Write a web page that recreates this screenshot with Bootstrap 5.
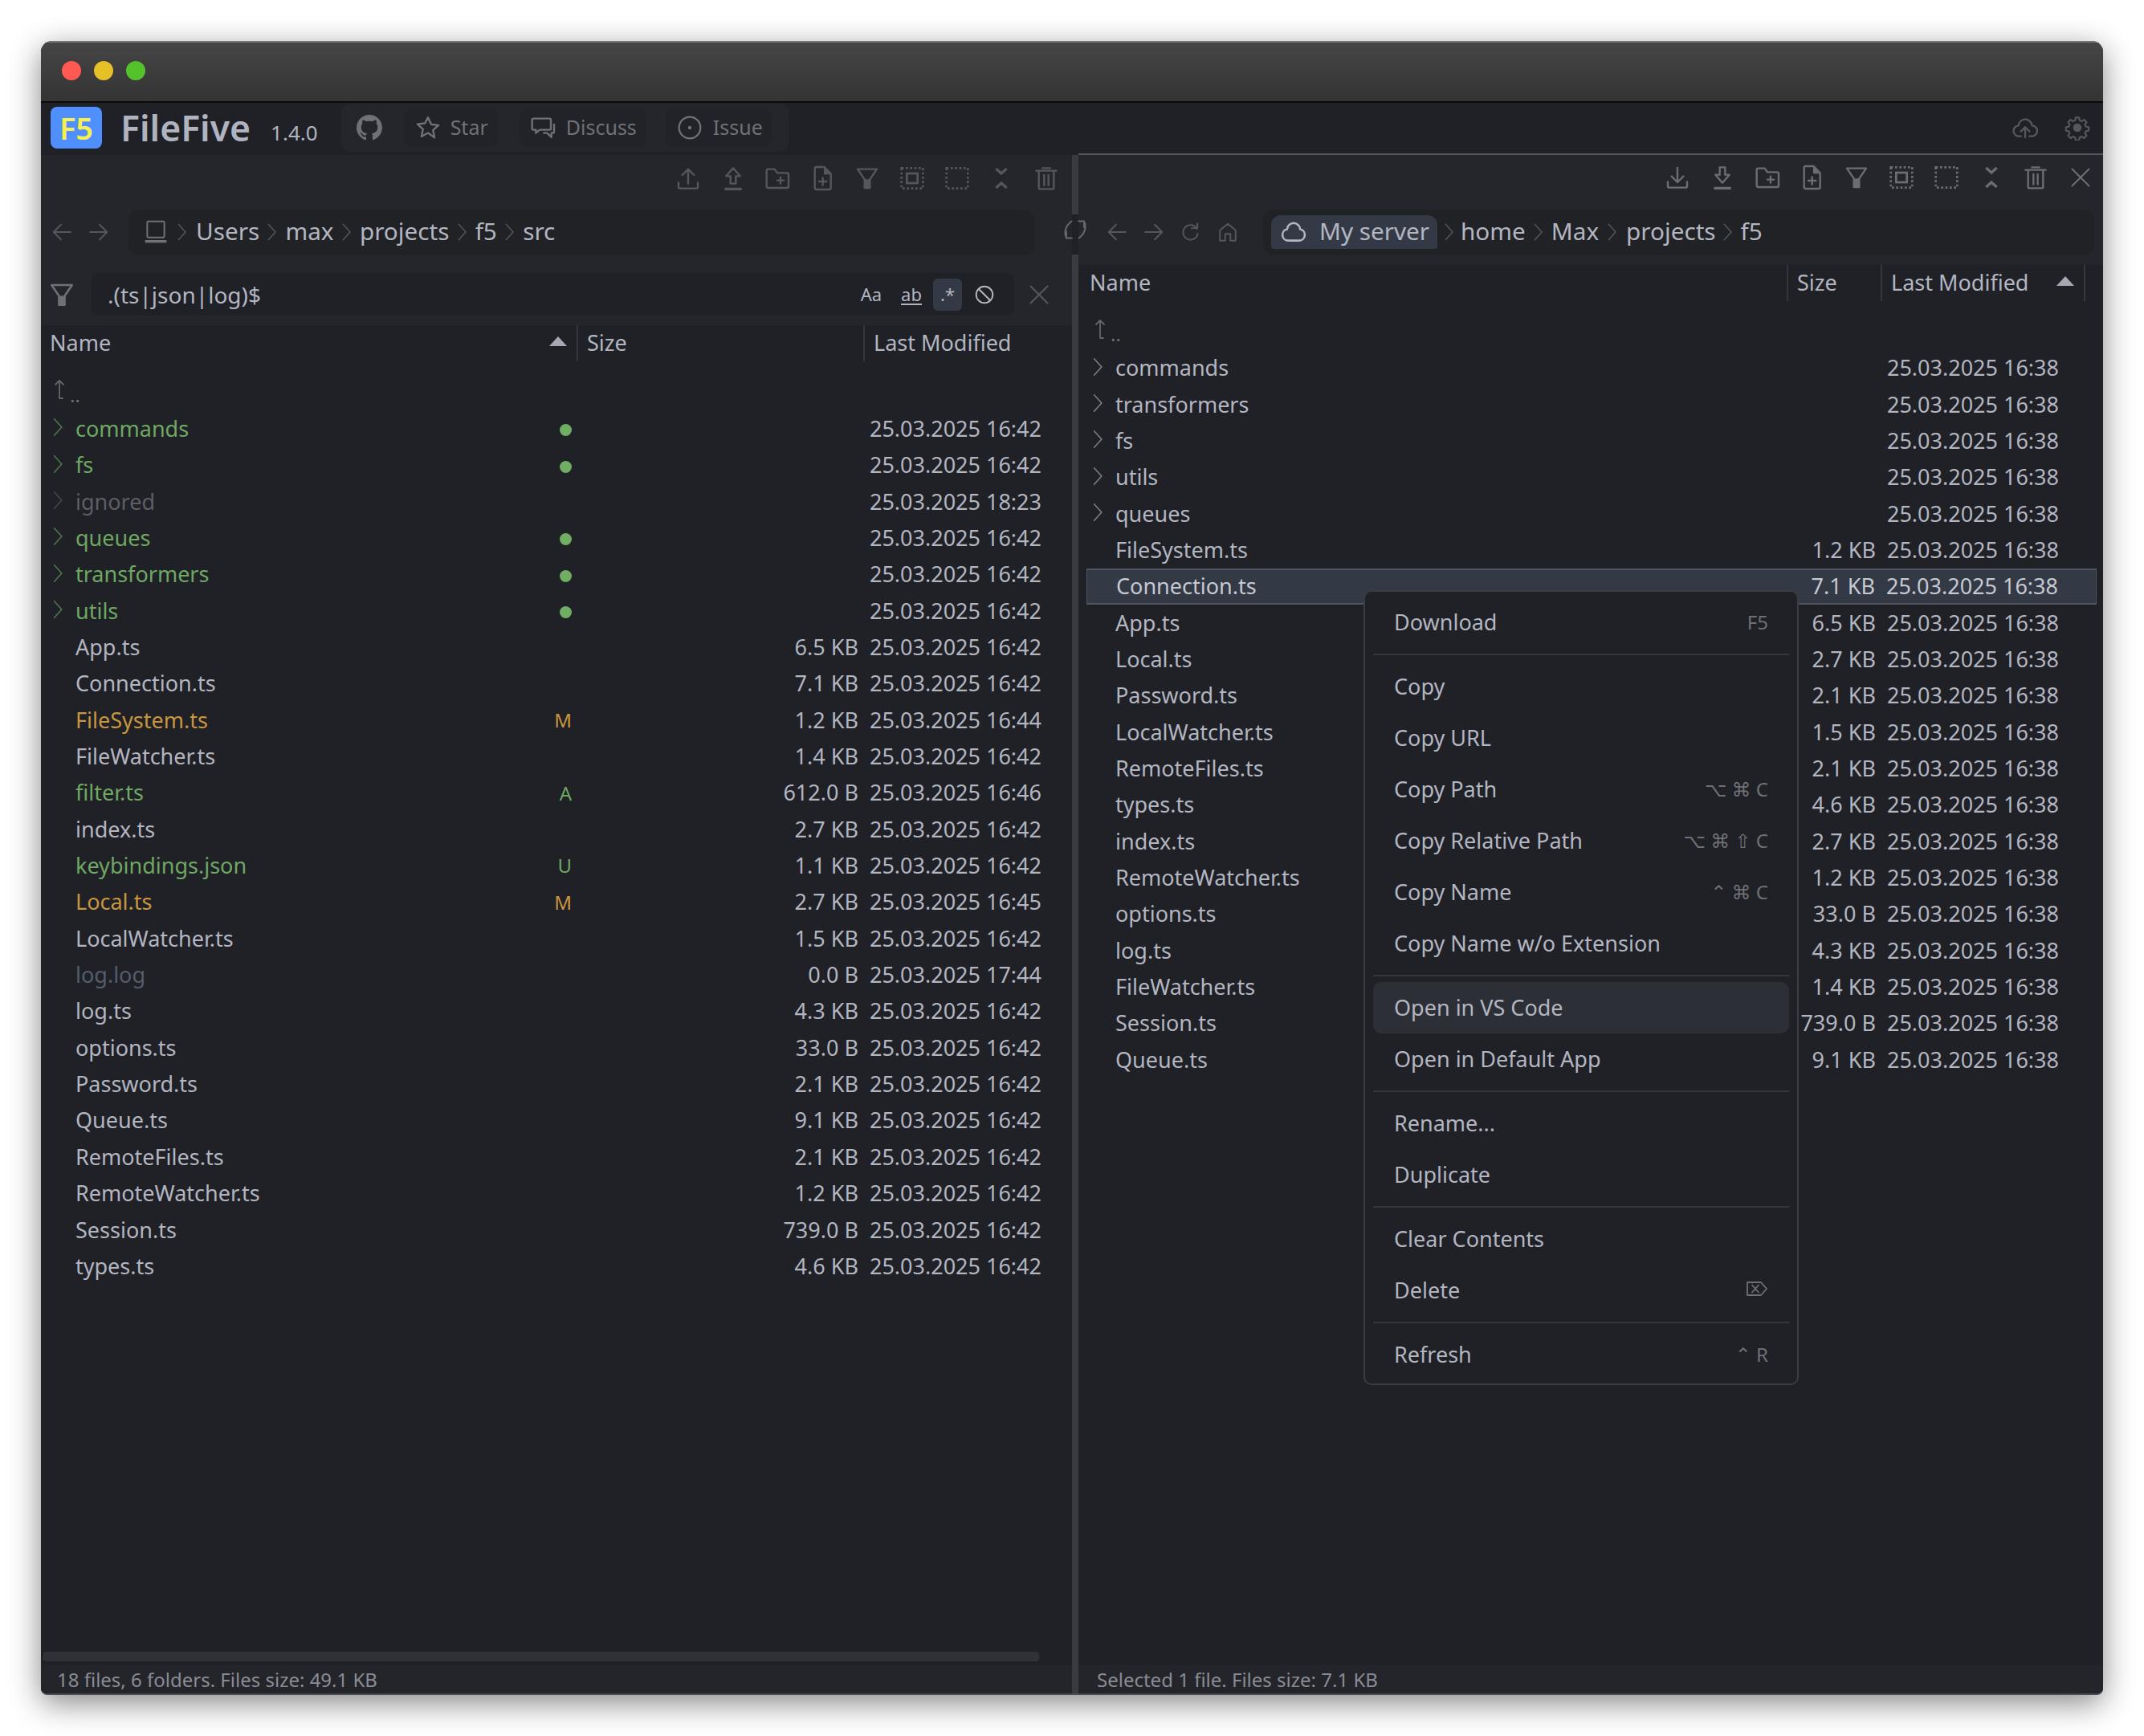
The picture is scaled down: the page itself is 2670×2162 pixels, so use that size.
<!DOCTYPE html>
<html lang="en" data-bs-theme="dark">
<head>
<meta charset="utf-8">
<title>FileFive</title>
<link href="https://cdn.jsdelivr.net/npm/bootstrap@5.3.0/dist/css/bootstrap.min.css" rel="stylesheet">
<style>
html,body{background:#fff;margin:0;padding:0}
body{font-family:"Noto Sans","Liberation Sans",sans-serif;font-size:27px;color:#b3b6c1;width:2670px;height:2162px;overflow:hidden}
.appwin{position:relative;width:2568px;height:2060px;margin:51px 0 0 51px;border-radius:14px 14px 8px 8px;background:#1f2127;box-shadow:0 10px 38px rgba(0,0,0,.48);overflow:hidden;border-bottom:2px solid #4a4c50}
.tbar{height:77px;background:linear-gradient(#454545,#343434);border-top:2px solid #777;border-bottom:2px solid #0b0b0b;padding-left:26px;gap:16px}
.tl{width:24px;height:24px;border-radius:50%;margin-top:-3px}
.tl-r{background:#ff5a52}.tl-y{background:#e6c029}.tl-g{background:#53c22b}
.topnav{height:65px;padding-left:12px;padding-right:16px;padding-bottom:3px}
.logo{width:64px;height:52px;background:#4f8fff;color:#f7ef4b;font-weight:600;font-size:38px;border-radius:8px;line-height:52px;text-align:center}
.appname{font-weight:600;font-size:44.5px;margin-left:23px;color:#b0b3c0;line-height:1}
.appver{font-size:26px;margin-left:25px;color:#b0b3c0;padding-top:12px}
.linkgrp{margin-left:29px;height:60px;width:557px;background:#24262b;border-radius:12px;padding:0 19px 0 19px}
.ghic{width:32px;height:32px;color:#6f7176;margin-right:27px;flex:none}
.lbtn.btn{height:47px;background:#212328;border:0;border-radius:10px;color:#6f7176;font-size:25px;padding:0 12px 0 14px;display:flex;align-items:center;gap:12px;flex:none}
.lbtn svg{width:32px;height:32px}
.discbtn.btn{margin-left:26px;margin-right:2px;gap:13px}
.issbtn.btn{margin-left:22px;gap:13px}
.ticon{width:32px;height:32px;color:#55575c}
.panes{height:1916px}
.lpane{width:1284px;height:100%}
.rpane{flex:1 1 0;height:calc(100% + 2px);border-top:2px solid #55575c;margin-top:-2px}
.splitwrap{width:8px;height:100%;position:relative;flex:none}
.splitbar{background:#393b41;width:8px}
.syncslot{height:50px;width:8px}
.syncic{position:absolute;left:-10px;top:79px;width:28px;height:28px;color:#66686d}
.chrome{background:#24262b}
.tools{height:58px;justify-content:flex-end;padding-right:4px}
.rpane .tools{padding-right:0;height:56px}
.tbtn{width:55.8px;height:100%;color:#55575c;flex:none}
.rpane .tbtn{color:#6b6d72}
.tbtn svg{width:32px;height:32px}
.pathrow{height:57px;margin-top:9px}
.rpane .pathrow{height:70px;margin-top:11px;padding-bottom:13px}
.navbtn{width:46px;flex:none;color:#55575c}
.navbtn svg{width:26px;height:26px}
.navfirst{margin-left:3px}
.rpane .navfirst{margin-left:25px}
.pathbox{height:56px;background:#202226;border-radius:12px;margin-left:14px;width:1128px;padding-left:18px;font-size:29.7px;color:#b3b6c1;white-space:nowrap}
.rpane .pathbox{margin-left:21px;width:1035px;padding-left:10px}
.chev{width:32.3px;color:#55575c;display:flex;justify-content:center}
.chev svg{width:14px;height:24px}
.chev-a{width:29px}.chev-b{width:32px}.chev-c{width:31px}.chev-d{width:34px}
.lapt{width:32px;height:32px;color:#6f7176}
.srvpill{height:42px;background:#333a46;border-radius:12px 12px 4px 4px;padding:0 9px 0 11px;gap:15px;width:207px;flex:none}
.srvpill svg{width:34px;height:34px;color:#b3b6c1;flex:none}
.filtrow{height:88px;padding-top:23px;padding-bottom:12px}
.filtic{width:63px;color:#6f7176;flex:none;padding-right:12px}
.filtic svg{width:34px;height:34px}
.filtbox{width:1149px;height:53px;background:#1f2127;border-radius:10px;padding-left:20px;font-size:28px;color:#b3b6c1;flex:none}
.optb{height:40px;color:#b3b6c1;font-size:22px;flex:none;display:flex;align-items:center;justify-content:center}
.optb u{text-underline-offset:3px}
.opton{background:#333a46;border-radius:6px;width:36px;margin-left:9px}
.optw{width:36px}
.optm{margin-left:14px}
.optban{width:28px;margin-left:14px;margin-right:23px}
.optban svg{width:26px;height:26px}
.filtx{width:62px;color:#55575c;flex:none}
.filtx svg{width:28px;height:28px}
.hdr{height:45px;padding-left:11px;background:#1f2127}
.rpane .hdr{padding-left:14px}
.hcol{height:100%;flex:none}
.hcol+.hcol{border-left:2px solid #35373d;padding-left:11px}
.hcol-end{border-right:2px solid #35373d}
.sorttri{width:0;height:0;border-left:11px solid transparent;border-right:11px solid transparent;border-bottom:12px solid #a6a9b4;margin-right:12px;margin-top:-6px}
.flist{padding-top:16.200px;flex:1 1 0}
.rpane .flist{padding-top:15.500px}
.frow{height:45.35px;white-space:nowrap}
.lpane .frow{padding-right:38px;padding-left:14px}
.rpane .frow{padding-right:47px;margin-left:10px;margin-right:8px;padding-left:7px}
.cchv{width:29px;flex:none;color:inherit}
.cchv svg{width:15px;height:26px;display:block;margin-top:-4px;opacity:.62}
.cname{flex:1 1 0;min-width:0}
.cmark{width:40px;text-align:right;flex:none;font-size:24px}
.lpane .csize{width:357px}
.csize{width:100px;text-align:right;flex:none;color:#b3b6c1}
.cdate{width:228px;text-align:right;flex:none;color:#b3b6c1}
.sel .csize,.sel .cdate{color:#c6c9d2}
.gdot{width:15px;height:15px;border-radius:50%;background:#6fae63;display:inline-block}
.c-g{color:#6fa862}.c-o{color:#c9963f}.c-i{color:#5c5e67}.c-ll{color:#555c6b}
.sel{background:#333a46;border-top:2px solid #4f545d;border-bottom:2px solid #4f545d;border-left:1px solid #4f545d;border-right:1px solid #4f545d;color:#c6c9d2}
.pup{width:18px;height:30px;color:#63656b;margin-right:4px;margin-top:-5px}
.pdots{color:#6f7176;font-size:24px;line-height:1;margin-top:6px}
.rpane .pup{margin-left:1px}
.sbar{height:12px;width:1241px;background:#2f3138;border-radius:4px;margin-left:2px;margin-bottom:4px;flex:none}
.stat{height:36px;background:#23252a;font-size:24px;color:#8a8c95;padding-left:20px;padding-top:1px;flex:none}
.rpane .stat{padding-left:23px}
.spacer-rsb{height:16px;flex:none}
.ctxm.dropdown-menu{position:absolute;display:block;left:1647px;top:684px;width:542px;min-width:0;padding:6px 10px 4px;background:#1f2127;border:2px solid #3a3c43;border-radius:10px;font-size:27px;margin:0;color:#b3b6c1;z-index:5}
.ctxm .dropdown-item{height:64px;color:#b3b6c1;padding:0 26px;border-radius:10px;display:flex;justify-content:space-between;align-items:center;background:none}
.ctxm .dropdown-item.hov{background:#2d2f37}
.ctxm .dropdown-divider{margin:7px 0;border-top:2px solid #35373c;opacity:1;height:0}
.kbd{color:#6e7075;font-size:24px;font-family:"Noto Sans","DejaVu Sans",sans-serif}
.kbd svg{width:28px;height:22px;display:block;margin-top:-4px}
svg{display:block}
.st{fill:none;stroke:currentColor;stroke-width:1.8;stroke-linecap:round;stroke-linejoin:round}
</style>
</head>
<body>
<svg width="0" height="0" style="position:absolute" aria-hidden="true">
<defs>
<symbol id="i-upt" viewBox="0 0 24 24"><path class="st" d="M3 16v4a1.500 1.500 0 0 0 1.500 1.500h15a1.500 1.500 0 0 0 1.500-1.500v-4M12 17V3.500M6.500 9 12 3.500 17.500 9"/></symbol>
<symbol id="i-upb" viewBox="0 0 24 24"><path class="st" d="M9.500 17v-7H5.500L12 2.500 18.500 10h-4v7z"/><path fill="none" stroke="currentColor" stroke-width="2.400" d="M4 22h16"/></symbol>
<symbol id="i-dnt" viewBox="0 0 24 24"><path class="st" d="M3 16v4a1.500 1.500 0 0 0 1.500 1.500h15a1.500 1.500 0 0 0 1.500-1.500v-4M12 3v13.500M6.500 11 12 16.500 17.500 11"/></symbol>
<symbol id="i-dnb" viewBox="0 0 24 24"><path class="st" d="M9.500 2.500v7H5.500L12 17l6.500-7.500h-4v-7z"/><path fill="none" stroke="currentColor" stroke-width="2.400" d="M4 22h16"/></symbol>
<symbol id="i-fold" viewBox="0 0 24 24"><path class="st" d="M2 5a1.500 1.500 0 0 1 1.500-1.500h6L12 7h9a1.500 1.500 0 0 1 1.500 1.500v11a1.500 1.500 0 0 1-1.500 1.500H3.500A1.500 1.500 0 0 1 2 19.500z" stroke-width="2"/><path class="st" d="M15 11v6M12 14h6" stroke-width="1.800"/></symbol>
<symbol id="i-file" viewBox="0 0 24 24"><path class="st" d="M6 1.500h8l6 6.500v13a1.500 1.500 0 0 1-1.500 1.500h-12A1.500 1.500 0 0 1 5 21V3a1.500 1.500 0 0 1 1-1.500z" stroke-width="2"/><path fill="currentColor" d="M13.500 2v6.500H20z"/><path class="st" d="M12.500 11.500v7M9 15h7" stroke-width="1.800"/></symbol>
<symbol id="i-filt" viewBox="0 0 24 24"><path class="st" d="M3 3.500h18l-6.500 9.500v8h-5v-8z" stroke-width="2"/><path fill="currentColor" d="M10 13h4v8h-4z"/></symbol>
<symbol id="i-sela" viewBox="0 0 24 24"><rect x="2" y="2.500" width="20" height="19" fill="none" stroke="currentColor" stroke-width="2" stroke-dasharray="2 2"/><rect x="7" y="7.500" width="10" height="9" fill="none" stroke="currentColor" stroke-width="2"/></symbol>
<symbol id="i-seln" viewBox="0 0 24 24"><rect x="2" y="2.500" width="20" height="19" fill="none" stroke="currentColor" stroke-width="2" stroke-dasharray="2 2"/></symbol>
<symbol id="i-coll" viewBox="0 0 24 24"><path fill="none" stroke="currentColor" stroke-width="2.400" d="M7 3l5 4.500L17 3M7 21l5-4.500L17 21"/></symbol>
<symbol id="i-trash" viewBox="0 0 24 24"><path class="st" d="M5 5.500V21a1 1 0 0 0 1 1h12a1 1 0 0 0 1-1V5.500M2.500 5h19M8.500 2.500h7M10 9v9.500M14 9v9.500" stroke-width="2"/></symbol>
<symbol id="i-x" viewBox="0 0 24 24"><path class="st" d="M3 3l18 18M21 3 3 21" stroke-width="1.700"/></symbol>
<symbol id="i-left" viewBox="0 0 24 24"><path class="st" d="M22 12H3M11 3.500 2.500 12l8.500 8.500" stroke-width="1.600"/></symbol>
<symbol id="i-right" viewBox="0 0 24 24"><path class="st" d="M2 12h19M13 3.500l8.500 8.500-8.500 8.500" stroke-width="1.600"/></symbol>
<symbol id="i-rel" viewBox="0 0 24 24"><path class="st" d="M19 8a8.500 8.500 0 1 0 1 6" stroke-width="1.800"/><path class="st" d="M13 7.500h6.500V2" stroke-width="1.800"/></symbol>
<symbol id="i-home" viewBox="0 0 24 24"><path class="st" d="M3 22V10l9-7.500 9 7.500v12h-6v-8H9v8z" stroke-width="1.600"/></symbol>
<symbol id="i-chev" viewBox="0 0 14 24"><path fill="none" stroke="currentColor" stroke-width="1.500" d="M2 2l9 10-9 10"/></symbol>
<symbol id="i-lap" viewBox="0 0 24 24"><rect x="4" y="2" width="16" height="15" rx="1" fill="none" stroke="currentColor" stroke-width="1.500"/><path fill="currentColor" d="M2 19.500h20V22H2z"/></symbol>
<symbol id="i-cloud" viewBox="0 0 24 24"><path class="st" d="M7 19.500a5 5 0 0 1-.8-9.900A6 6 0 0 1 12 4a6 6 0 0 1 5.800 5.600A5 5 0 0 1 17 19.500z" stroke-width="1.400"/></symbol>
<symbol id="i-cldu" viewBox="0 0 24 24"><path class="st" d="M8 20H6.500A5 5 0 0 1 5.800 10 7 7 0 0 1 12 4a7 7 0 0 1 6.500 6 5 5 0 0 1-.5 10h-2M12 21v-9M8 15.500 12 11.500l4 4" stroke-width="1.800"/></symbol>
<symbol id="i-gear" viewBox="0 0 24 24"><path class="st" d="M10.200 1.500h3.600l.5 2.900 2.300 1 2.400-1.700 2.600 2.600-1.700 2.400 1 2.300 2.900.5v3.600l-2.900.5-1 2.300 1.700 2.400-2.600 2.600-2.400-1.700-2.300 1-.5 2.900h-3.600l-.5-2.900-2.300-1-2.400 1.700-2.600-2.600 1.700-2.400-1-2.300-2.900-.5v-3.600l2.900-.5 1-2.300-1.700-2.400 2.600-2.600 2.400 1.700 2.300-1z" transform="translate(1.200 1.200) scale(.9)" stroke-width="2"/><circle cx="12" cy="12" r="4" fill="currentColor"/></symbol>
<symbol id="i-gh" viewBox="0 0 16 16"><path fill="currentColor" d="M8 0C3.580 0 0 3.580 0 8c0 3.540 2.290 6.530 5.470 7.590.4.070.55-.17.55-.38 0-.19-.01-.82-.01-1.490-2.010.37-2.530-.49-2.690-.94-.09-.23-.48-.94-.82-1.130-.28-.15-.68-.52-.01-.53.63-.01 1.080.58 1.230.82.72 1.210 1.870.87 2.330.66.070-.52.28-.87.51-1.070-1.780-.2-3.640-.89-3.640-3.950 0-.87.31-1.590.82-2.150-.08-.2-.36-1.020.08-2.120 0 0 .67-.21 2.200.82.64-.18 1.320-.27 2-.27.68 0 1.360.09 2 .27 1.530-1.040 2.200-.82 2.200-.82.44 1.100.16 1.920.08 2.120.51.56.82 1.270.82 2.150 0 3.070-1.870 3.750-3.650 3.950.29.25.54.73.54 1.480 0 1.070-.01 1.930-.01 2.200 0 .21.15.46.55.38A8.013 8.013 0 0 0 16 8c0-4.420-3.580-8-8-8z"/></symbol>
<symbol id="i-star" viewBox="0 0 24 24"><path class="st" d="M12 2.500l2.900 6.400 6.900.8-5.100 4.700 1.400 6.900L12 16.900l-6.100 3.400 1.400-6.900-5.100-4.700 6.900-.8z" stroke-width="2"/></symbol>
<symbol id="i-disc" viewBox="0 0 24 24"><path class="st" d="M3 3.500h15.500a1 1 0 0 1 1 1V13a1 1 0 0 1-1 1H9l-3.500 3v-3H3a1 1 0 0 1-1-1V4.500a1 1 0 0 1 1-1z" stroke-width="1.900"/><path class="st" d="M22.500 9v7a1 1 0 0 1-1 1h-1.500v4l-4-4h-3" stroke-width="1.900"/></symbol>
<symbol id="i-iss" viewBox="0 0 24 24"><circle cx="12" cy="12" r="10" fill="none" stroke="currentColor" stroke-width="1.700"/><circle cx="12" cy="12" r="1.700" fill="currentColor"/></symbol>
<symbol id="i-sync" viewBox="0 0 24 24"><path class="st" d="M15.500 3h6v6.500M21.500 3.500c1.500 3 1.500 6.500.5 9.500-.8 3-3 5.500-6 8M8.500 21h-6v-6.500M2.500 20.500c-1.500-3-1.500-6.500-.5-9.500.8-3 3-5.500 6-8" stroke-width="2.400"/></symbol>
<symbol id="i-ban" viewBox="0 0 24 24"><circle cx="12" cy="12" r="9.500" fill="none" stroke="currentColor" stroke-width="1.800"/><path fill="none" stroke="currentColor" stroke-width="1.800" d="M5.500 5.500l13 13"/></symbol>
<symbol id="i-del" viewBox="0 0 28 22"><path class="st" d="M2 3h17l7 8-7 8H2zM8 6.500l8 9M16 6.500l-8 9" stroke-width="1.800"/></symbol>
<symbol id="i-pup" viewBox="0 0 18 30"><path class="st" d="M9 3v22h4M4 8l5-5 5 5" stroke-width="1.600"/></symbol>
</defs>
</svg>

<div class="appwin d-flex flex-column">
  <div class="tbar d-flex align-items-center"><span class="tl tl-r"></span><span class="tl tl-y"></span><span class="tl tl-g"></span></div>
  <div class="topnav d-flex align-items-center">
    <div class="logo flex-shrink-0">F5</div>
    <div class="appname">FileFive</div>
    <div class="appver">1.4.0</div>
    <div class="linkgrp d-flex align-items-center">
      <svg class="ghic"><use href="#i-gh"/></svg>
      <button class="btn lbtn"><svg><use href="#i-star"/></svg>Star</button>
      <button class="btn lbtn discbtn"><svg><use href="#i-disc"/></svg>Discuss</button>
      <button class="btn lbtn issbtn"><svg><use href="#i-iss"/></svg>Issue</button>
    </div>
    <svg class="ticon ms-auto"><use href="#i-cldu"/></svg>
    <svg class="ticon" style="margin-left:33px"><use href="#i-gear"/></svg>
  </div>

  <div class="panes d-flex">
    <!-- left -->
    <div class="lpane d-flex flex-column">
      <div class="chrome">
        <div class="tools d-flex">
          <div class="tbtn d-flex align-items-center justify-content-center"><svg><use href="#i-upt"/></svg></div>
          <div class="tbtn d-flex align-items-center justify-content-center"><svg><use href="#i-upb"/></svg></div>
          <div class="tbtn d-flex align-items-center justify-content-center"><svg><use href="#i-fold"/></svg></div>
          <div class="tbtn d-flex align-items-center justify-content-center"><svg><use href="#i-file"/></svg></div>
          <div class="tbtn d-flex align-items-center justify-content-center"><svg><use href="#i-filt"/></svg></div>
          <div class="tbtn d-flex align-items-center justify-content-center"><svg><use href="#i-sela"/></svg></div>
          <div class="tbtn d-flex align-items-center justify-content-center"><svg><use href="#i-seln"/></svg></div>
          <div class="tbtn d-flex align-items-center justify-content-center"><svg><use href="#i-coll"/></svg></div>
          <div class="tbtn d-flex align-items-center justify-content-center"><svg><use href="#i-trash"/></svg></div>
        </div>
        <div class="pathrow d-flex align-items-center">
          <div class="navbtn navfirst d-flex justify-content-center"><svg><use href="#i-left"/></svg></div>
          <div class="navbtn d-flex justify-content-center"><svg><use href="#i-right"/></svg></div>
          <div class="pathbox d-flex align-items-center">
            <svg class="lapt"><use href="#i-lap"/></svg>
            <span class="chev chev-d"><svg><use href="#i-chev"/></svg></span><span>Users</span>
            <span class="chev"><svg><use href="#i-chev"/></svg></span><span>max</span>
            <span class="chev"><svg><use href="#i-chev"/></svg></span><span>projects</span>
            <span class="chev"><svg><use href="#i-chev"/></svg></span><span>f5</span>
            <span class="chev"><svg><use href="#i-chev"/></svg></span><span>src</span>
          </div>
        </div>
        <div class="filtrow d-flex align-items-center">
          <div class="filtic d-flex justify-content-center"><svg><use href="#i-filt"/></svg></div>
          <div class="filtbox d-flex align-items-center">
            <span class="flex-grow-1">.(ts|json|log)$</span>
            <span class="optb optw">Aa</span>
            <span class="optb optw optm"><u>ab</u></span>
            <span class="optb opton">.*</span>
            <span class="optb optban"><svg><use href="#i-ban"/></svg></span>
          </div>
          <div class="filtx d-flex justify-content-center"><svg><use href="#i-x"/></svg></div>
        </div>
      </div>
      <div class="hdr d-flex align-items-center">
        <div class="hcol d-flex align-items-center justify-content-between" style="width:656px">Name<span class="sorttri"></span></div>
        <div class="hcol d-flex align-items-center" style="width:357px">Size</div>
        <div class="hcol d-flex align-items-center">Last Modified</div>
      </div>
      <div class="flist">
        <div class="frow d-flex align-items-center"><svg class="pup"><use href="#i-pup"/></svg><span class="pdots">..</span></div>
        <div class="frow d-flex align-items-center c-g"><span class="cchv"><svg><use href="#i-chev"/></svg></span><span class="cname">commands</span><span class="cmark"><span class="gdot"></span></span><span class="csize"></span><span class="cdate">25.03.2025 16:42</span></div>
        <div class="frow d-flex align-items-center c-g"><span class="cchv"><svg><use href="#i-chev"/></svg></span><span class="cname">fs</span><span class="cmark"><span class="gdot"></span></span><span class="csize"></span><span class="cdate">25.03.2025 16:42</span></div>
        <div class="frow d-flex align-items-center c-i"><span class="cchv"><svg><use href="#i-chev"/></svg></span><span class="cname">ignored</span><span class="cmark"></span><span class="csize"></span><span class="cdate">25.03.2025 18:23</span></div>
        <div class="frow d-flex align-items-center c-g"><span class="cchv"><svg><use href="#i-chev"/></svg></span><span class="cname">queues</span><span class="cmark"><span class="gdot"></span></span><span class="csize"></span><span class="cdate">25.03.2025 16:42</span></div>
        <div class="frow d-flex align-items-center c-g"><span class="cchv"><svg><use href="#i-chev"/></svg></span><span class="cname">transformers</span><span class="cmark"><span class="gdot"></span></span><span class="csize"></span><span class="cdate">25.03.2025 16:42</span></div>
        <div class="frow d-flex align-items-center c-g"><span class="cchv"><svg><use href="#i-chev"/></svg></span><span class="cname">utils</span><span class="cmark"><span class="gdot"></span></span><span class="csize"></span><span class="cdate">25.03.2025 16:42</span></div>
        <div class="frow d-flex align-items-center"><span class="cchv"></span><span class="cname">App.ts</span><span class="cmark"></span><span class="csize">6.5 KB</span><span class="cdate">25.03.2025 16:42</span></div>
        <div class="frow d-flex align-items-center"><span class="cchv"></span><span class="cname">Connection.ts</span><span class="cmark"></span><span class="csize">7.1 KB</span><span class="cdate">25.03.2025 16:42</span></div>
        <div class="frow d-flex align-items-center c-o"><span class="cchv"></span><span class="cname">FileSystem.ts</span><span class="cmark">M</span><span class="csize">1.2 KB</span><span class="cdate">25.03.2025 16:44</span></div>
        <div class="frow d-flex align-items-center"><span class="cchv"></span><span class="cname">FileWatcher.ts</span><span class="cmark"></span><span class="csize">1.4 KB</span><span class="cdate">25.03.2025 16:42</span></div>
        <div class="frow d-flex align-items-center c-g"><span class="cchv"></span><span class="cname">filter.ts</span><span class="cmark">A</span><span class="csize">612.0 B</span><span class="cdate">25.03.2025 16:46</span></div>
        <div class="frow d-flex align-items-center"><span class="cchv"></span><span class="cname">index.ts</span><span class="cmark"></span><span class="csize">2.7 KB</span><span class="cdate">25.03.2025 16:42</span></div>
        <div class="frow d-flex align-items-center c-g"><span class="cchv"></span><span class="cname">keybindings.json</span><span class="cmark">U</span><span class="csize">1.1 KB</span><span class="cdate">25.03.2025 16:42</span></div>
        <div class="frow d-flex align-items-center c-o"><span class="cchv"></span><span class="cname">Local.ts</span><span class="cmark">M</span><span class="csize">2.7 KB</span><span class="cdate">25.03.2025 16:45</span></div>
        <div class="frow d-flex align-items-center"><span class="cchv"></span><span class="cname">LocalWatcher.ts</span><span class="cmark"></span><span class="csize">1.5 KB</span><span class="cdate">25.03.2025 16:42</span></div>
        <div class="frow d-flex align-items-center"><span class="cchv"></span><span class="cname c-ll">log.log</span><span class="cmark"></span><span class="csize">0.0 B</span><span class="cdate">25.03.2025 17:44</span></div>
        <div class="frow d-flex align-items-center"><span class="cchv"></span><span class="cname">log.ts</span><span class="cmark"></span><span class="csize">4.3 KB</span><span class="cdate">25.03.2025 16:42</span></div>
        <div class="frow d-flex align-items-center"><span class="cchv"></span><span class="cname">options.ts</span><span class="cmark"></span><span class="csize">33.0 B</span><span class="cdate">25.03.2025 16:42</span></div>
        <div class="frow d-flex align-items-center"><span class="cchv"></span><span class="cname">Password.ts</span><span class="cmark"></span><span class="csize">2.1 KB</span><span class="cdate">25.03.2025 16:42</span></div>
        <div class="frow d-flex align-items-center"><span class="cchv"></span><span class="cname">Queue.ts</span><span class="cmark"></span><span class="csize">9.1 KB</span><span class="cdate">25.03.2025 16:42</span></div>
        <div class="frow d-flex align-items-center"><span class="cchv"></span><span class="cname">RemoteFiles.ts</span><span class="cmark"></span><span class="csize">2.1 KB</span><span class="cdate">25.03.2025 16:42</span></div>
        <div class="frow d-flex align-items-center"><span class="cchv"></span><span class="cname">RemoteWatcher.ts</span><span class="cmark"></span><span class="csize">1.2 KB</span><span class="cdate">25.03.2025 16:42</span></div>
        <div class="frow d-flex align-items-center"><span class="cchv"></span><span class="cname">Session.ts</span><span class="cmark"></span><span class="csize">739.0 B</span><span class="cdate">25.03.2025 16:42</span></div>
        <div class="frow d-flex align-items-center"><span class="cchv"></span><span class="cname">types.ts</span><span class="cmark"></span><span class="csize">4.6 KB</span><span class="cdate">25.03.2025 16:42</span></div>
      </div>
      <div class="sbar"></div>
      <div class="stat d-flex align-items-center">18 files, 6 folders. Files size: 49.1 KB</div>
    </div>
    <!-- splitter -->
    <div class="splitwrap d-flex flex-column">
      <div class="splitbar" style="height:74px"></div>
      <div class="syncslot"></div>
      <div class="splitbar flex-grow-1"></div>
      <svg class="syncic"><use href="#i-sync"/></svg>
    </div>
    <!-- right -->
    <div class="rpane d-flex flex-column">
      <div class="chrome">
        <div class="tools d-flex">
          <div class="tbtn d-flex align-items-center justify-content-center"><svg><use href="#i-dnt"/></svg></div>
          <div class="tbtn d-flex align-items-center justify-content-center"><svg><use href="#i-dnb"/></svg></div>
          <div class="tbtn d-flex align-items-center justify-content-center"><svg><use href="#i-fold"/></svg></div>
          <div class="tbtn d-flex align-items-center justify-content-center"><svg><use href="#i-file"/></svg></div>
          <div class="tbtn d-flex align-items-center justify-content-center"><svg><use href="#i-filt"/></svg></div>
          <div class="tbtn d-flex align-items-center justify-content-center"><svg><use href="#i-sela"/></svg></div>
          <div class="tbtn d-flex align-items-center justify-content-center"><svg><use href="#i-seln"/></svg></div>
          <div class="tbtn d-flex align-items-center justify-content-center"><svg><use href="#i-coll"/></svg></div>
          <div class="tbtn d-flex align-items-center justify-content-center"><svg><use href="#i-trash"/></svg></div>
          <div class="tbtn d-flex align-items-center justify-content-center"><svg style="width:28px;height:28px"><use href="#i-x"/></svg></div>
        </div>
        <div class="pathrow d-flex align-items-center">
          <div class="navbtn navfirst d-flex justify-content-center"><svg><use href="#i-left"/></svg></div>
          <div class="navbtn d-flex justify-content-center"><svg><use href="#i-right"/></svg></div>
          <div class="navbtn d-flex justify-content-center"><svg><use href="#i-rel"/></svg></div>
          <div class="navbtn d-flex justify-content-center"><svg><use href="#i-home"/></svg></div>
          <div class="pathbox d-flex align-items-center">
            <span class="srvpill d-flex align-items-center"><svg><use href="#i-cloud"/></svg>My server</span>
            <span class="chev chev-a"><svg><use href="#i-chev"/></svg></span><span>home</span>
            <span class="chev chev-b"><svg><use href="#i-chev"/></svg></span><span>Max</span>
            <span class="chev chev-d"><svg><use href="#i-chev"/></svg></span><span>projects</span>
            <span class="chev chev-c"><svg><use href="#i-chev"/></svg></span><span>f5</span>
          </div>
        </div>
      </div>
      <div class="hdr d-flex align-items-center">
        <div class="hcol d-flex align-items-center" style="width:868px">Name</div>
        <div class="hcol d-flex align-items-center" style="width:117px">Size</div>
        <div class="hcol hcol-end d-flex align-items-center justify-content-between" style="width:255px">Last Modified<span class="sorttri"></span></div>
      </div>
      <div class="flist">
        <div class="frow d-flex align-items-center"><svg class="pup"><use href="#i-pup"/></svg><span class="pdots">..</span></div>
        <div class="frow d-flex align-items-center"><span class="cchv"><svg><use href="#i-chev"/></svg></span><span class="cname">commands</span><span class="csize"></span><span class="cdate">25.03.2025 16:38</span></div>
        <div class="frow d-flex align-items-center"><span class="cchv"><svg><use href="#i-chev"/></svg></span><span class="cname">transformers</span><span class="csize"></span><span class="cdate">25.03.2025 16:38</span></div>
        <div class="frow d-flex align-items-center"><span class="cchv"><svg><use href="#i-chev"/></svg></span><span class="cname">fs</span><span class="csize"></span><span class="cdate">25.03.2025 16:38</span></div>
        <div class="frow d-flex align-items-center"><span class="cchv"><svg><use href="#i-chev"/></svg></span><span class="cname">utils</span><span class="csize"></span><span class="cdate">25.03.2025 16:38</span></div>
        <div class="frow d-flex align-items-center"><span class="cchv"><svg><use href="#i-chev"/></svg></span><span class="cname">queues</span><span class="csize"></span><span class="cdate">25.03.2025 16:38</span></div>
        <div class="frow d-flex align-items-center"><span class="cchv"></span><span class="cname">FileSystem.ts</span><span class="csize">1.2 KB</span><span class="cdate">25.03.2025 16:38</span></div>
        <div class="frow d-flex align-items-center sel"><span class="cchv"></span><span class="cname">Connection.ts</span><span class="csize">7.1 KB</span><span class="cdate">25.03.2025 16:38</span></div>
        <div class="frow d-flex align-items-center"><span class="cchv"></span><span class="cname">App.ts</span><span class="csize">6.5 KB</span><span class="cdate">25.03.2025 16:38</span></div>
        <div class="frow d-flex align-items-center"><span class="cchv"></span><span class="cname">Local.ts</span><span class="csize">2.7 KB</span><span class="cdate">25.03.2025 16:38</span></div>
        <div class="frow d-flex align-items-center"><span class="cchv"></span><span class="cname">Password.ts</span><span class="csize">2.1 KB</span><span class="cdate">25.03.2025 16:38</span></div>
        <div class="frow d-flex align-items-center"><span class="cchv"></span><span class="cname">LocalWatcher.ts</span><span class="csize">1.5 KB</span><span class="cdate">25.03.2025 16:38</span></div>
        <div class="frow d-flex align-items-center"><span class="cchv"></span><span class="cname">RemoteFiles.ts</span><span class="csize">2.1 KB</span><span class="cdate">25.03.2025 16:38</span></div>
        <div class="frow d-flex align-items-center"><span class="cchv"></span><span class="cname">types.ts</span><span class="csize">4.6 KB</span><span class="cdate">25.03.2025 16:38</span></div>
        <div class="frow d-flex align-items-center"><span class="cchv"></span><span class="cname">index.ts</span><span class="csize">2.7 KB</span><span class="cdate">25.03.2025 16:38</span></div>
        <div class="frow d-flex align-items-center"><span class="cchv"></span><span class="cname">RemoteWatcher.ts</span><span class="csize">1.2 KB</span><span class="cdate">25.03.2025 16:38</span></div>
        <div class="frow d-flex align-items-center"><span class="cchv"></span><span class="cname">options.ts</span><span class="csize">33.0 B</span><span class="cdate">25.03.2025 16:38</span></div>
        <div class="frow d-flex align-items-center"><span class="cchv"></span><span class="cname">log.ts</span><span class="csize">4.3 KB</span><span class="cdate">25.03.2025 16:38</span></div>
        <div class="frow d-flex align-items-center"><span class="cchv"></span><span class="cname">FileWatcher.ts</span><span class="csize">1.4 KB</span><span class="cdate">25.03.2025 16:38</span></div>
        <div class="frow d-flex align-items-center"><span class="cchv"></span><span class="cname">Session.ts</span><span class="csize">739.0 B</span><span class="cdate">25.03.2025 16:38</span></div>
        <div class="frow d-flex align-items-center"><span class="cchv"></span><span class="cname">Queue.ts</span><span class="csize">9.1 KB</span><span class="cdate">25.03.2025 16:38</span></div>
      </div>
      <div class="spacer-rsb"></div>
      <div class="stat d-flex align-items-center">Selected 1 file. Files size: 7.1 KB</div>
    </div>
  </div>

  <div class="ctxm dropdown-menu">
    <div class="dropdown-item">Download<span class="kbd">F5</span></div>
    <hr class="dropdown-divider">
    <div class="dropdown-item">Copy</div>
    <div class="dropdown-item">Copy URL</div>
    <div class="dropdown-item">Copy Path<span class="kbd">⌥ ⌘ C</span></div>
    <div class="dropdown-item">Copy Relative Path<span class="kbd">⌥ ⌘ ⇧ C</span></div>
    <div class="dropdown-item">Copy Name<span class="kbd">⌃ ⌘ C</span></div>
    <div class="dropdown-item">Copy Name w/o Extension</div>
    <hr class="dropdown-divider">
    <div class="dropdown-item hov">Open in VS Code</div>
    <div class="dropdown-item">Open in Default App</div>
    <hr class="dropdown-divider">
    <div class="dropdown-item">Rename...</div>
    <div class="dropdown-item">Duplicate</div>
    <hr class="dropdown-divider">
    <div class="dropdown-item">Clear Contents</div>
    <div class="dropdown-item">Delete<span class="kbd"><svg><use href="#i-del"/></svg></span></div>
    <hr class="dropdown-divider">
    <div class="dropdown-item">Refresh<span class="kbd">⌃ R</span></div>
  </div>
</div>
<script src="https://cdn.jsdelivr.net/npm/bootstrap@5.3.0/dist/js/bootstrap.bundle.min.js"></script>
</body>
</html>
